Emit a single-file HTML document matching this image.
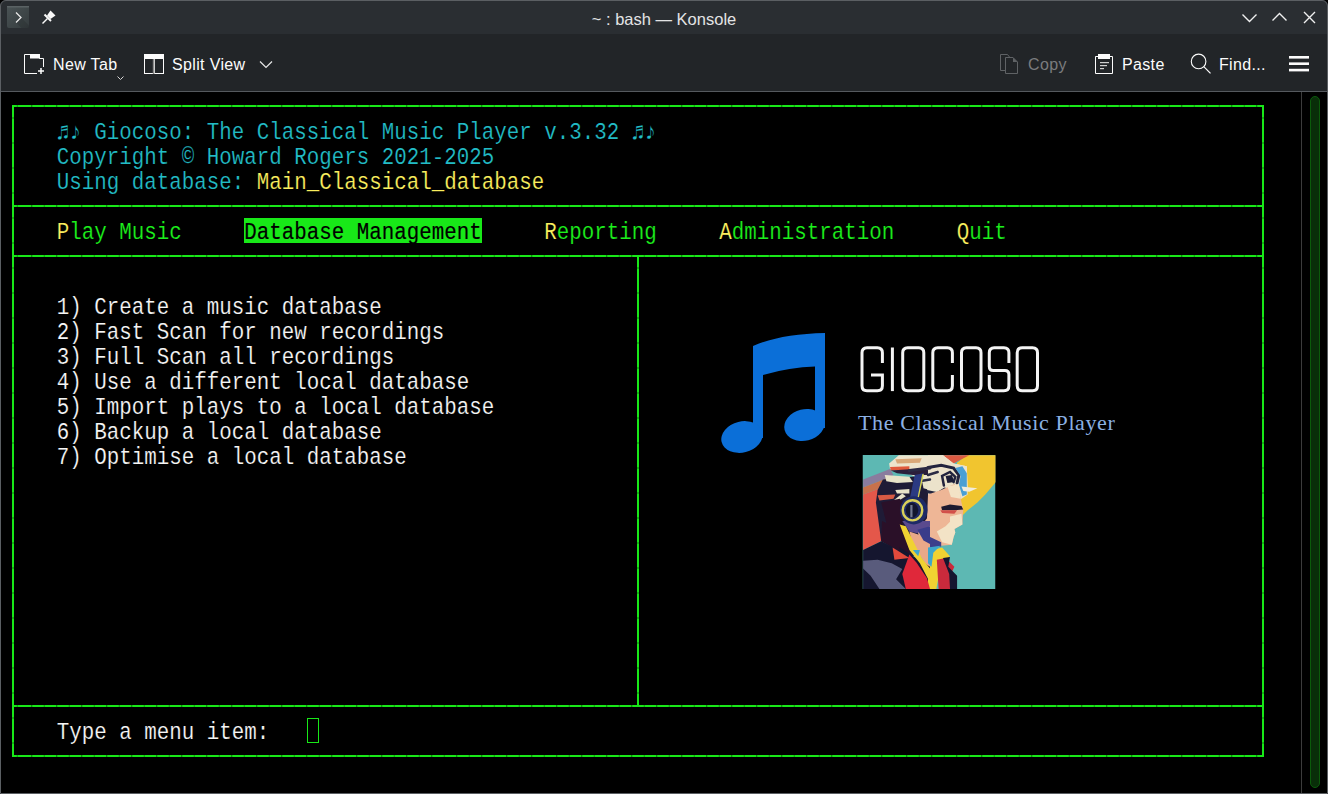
<!DOCTYPE html>
<html><head><meta charset="utf-8">
<style>
html,body{margin:0;padding:0;}
body{width:1328px;height:794px;position:relative;overflow:hidden;background:#000;font-family:"Liberation Sans",sans-serif;}
.abs{position:absolute;}
#titlebar{left:0;top:0;width:1328px;height:34px;background:#2a2e32;border-radius:6px 6px 0 0;}
#toolbar{left:0;top:34px;width:1328px;height:57px;background:#222528;}
#sep{left:0;top:91px;width:1328px;height:1px;background:#55595e;}
.title{left:0;top:9px;width:1328px;text-align:center;color:#e3e4e5;font-size:16.5px;line-height:20px;}
.tb{color:#fcfcfc;font-size:16px;letter-spacing:0.35px;line-height:20px;top:55px;}
.term{font-family:"Liberation Mono",monospace;font-size:20.83px;line-height:25px;white-space:pre;}
.row{position:absolute;left:6.75px;height:25px;transform:translateY(1px) scaleY(1.17);transform-origin:0 5px;-webkit-text-stroke:0.15px #000;}
.cy{color:#22bcc6;}
.ye{color:#fbef5e;}
.gr{color:#1cf01c;}
.wh{color:#f6f6f6;}
.hl{color:#000;}
.hline{position:absolute;height:2px;background-color:#18e818;background-image:repeating-linear-gradient(90deg,transparent 0,transparent 24px,rgba(0,0,0,.5) 24px,rgba(0,0,0,.5) 25px),repeating-linear-gradient(90deg,transparent 0,transparent 24px,rgba(0,0,0,.35) 24px,rgba(0,0,0,.35) 25px);background-position:-4.75px 0,7.75px 0;}
.vline{position:absolute;width:2px;background-color:#18e818;background-image:repeating-linear-gradient(180deg,transparent 0,transparent 24px,rgba(0,0,0,.45) 24px,rgba(0,0,0,.45) 25px);background-position:0 -11.5px;}
</style></head><body>
<div id="titlebar" class="abs"></div>
<div id="toolbar" class="abs"></div>
<div id="sep" class="abs"></div>

<div class="abs title">~ : bash — Konsole</div>


<svg class="abs" style="left:0;top:0" width="1328" height="794" viewBox="0 0 1328 794">
<!-- title bar icons -->
<defs><linearGradient id="tg" x1="0" y1="0" x2="1" y2="1"><stop offset="0" stop-color="#4a5355"/><stop offset="1" stop-color="#353c3e"/></linearGradient></defs><rect x="7" y="6" width="22" height="22" rx="2" fill="url(#tg)"/><path d="M16 22.5 L21 17.5 L29 25.5 V26 Q29 28 27 28 H21.5 Z" fill="#000" opacity="0.12"/>
<rect x="7" y="6" width="22" height="1.5" fill="#5a6264"/>
<path d="M16 12.5 L21 17.5 L16 22.5" fill="none" stroke="#e8e8e8" stroke-width="1.3"/>
<path d="M50.5 10.5 L55.5 15.5 L50.5 19 L47 15.5 Z" fill="#fafafa"/>
<path d="M44.5 14.5 L51 21" stroke="#fafafa" stroke-width="2"/>
<path d="M42.5 23.5 L47.5 18.5" stroke="#fafafa" stroke-width="1.5"/>
<path d="M1242.5 14.5 L1249.5 21.5 L1256.5 14.5" fill="none" stroke="#f0f0f0" stroke-width="1.4"/>
<path d="M1272.5 20.5 L1279.5 13.5 L1286.5 20.5" fill="none" stroke="#f0f0f0" stroke-width="1.4"/>
<path d="M1304 12 L1315 23 M1315 12 L1304 23" fill="none" stroke="#f0f0f0" stroke-width="1.4"/>
<!-- new tab icon -->
<g fill="none" stroke="#fcfcfc" stroke-width="1">
<path d="M24.5 54.5 H39.5 V58.5 H43.5 V67"/>
<path d="M24.5 54.5 V73.5 H37"/>
</g>
<rect x="30" y="54" width="10" height="4.5" fill="#fcfcfc"/>
<path d="M38 71 H44 M41 68 V74" stroke="#fcfcfc" stroke-width="1.5"/>
<path d="M117.5 76.5 L120.5 79.5 L123.5 76.5" fill="none" stroke="#d8d8d8" stroke-width="1"/>
<!-- split view icon -->
<g fill="none" stroke="#fcfcfc" stroke-width="1">
<rect x="144.5" y="54.5" width="9" height="19"/>
<rect x="154.5" y="54.5" width="9" height="19"/>
</g>
<rect x="144" y="54" width="10" height="5" fill="#fcfcfc"/><rect x="154" y="54" width="10" height="5" fill="#fcfcfc"/>
<rect x="152.8" y="59" width="1.6" height="15" fill="#8a8a8a"/>
<path d="M260 61.5 L266 67.5 L272 61.5" fill="none" stroke="#e8e8e8" stroke-width="1.2"/>
<!-- copy icon (disabled) -->
<g fill="none" stroke="#5f6265" stroke-width="1">
<path d="M1005.5 70.5 H1000.5 V54.5 H1007.5 L1009.5 57"/>
<path d="M1005.5 57.5 H1013 L1017.5 62 V73.5 H1005.5 Z"/>
</g>
<path d="M1013 57.5 V62 H1017.5" fill="#5f6265"/>
<!-- paste icon -->
<g fill="none" stroke="#fcfcfc" stroke-width="1">
<path d="M1098 56.5 H1095.5 V73.5 H1112.5 V56.5 H1110"/>
</g>
<rect x="1098" y="54" width="12" height="5" fill="#fcfcfc"/>
<rect x="1100" y="62" width="9" height="1.2" fill="#d0d0d0"/>
<rect x="1100" y="65" width="7" height="1.2" fill="#d0d0d0"/>
<rect x="1100" y="68" width="4" height="1.2" fill="#d0d0d0"/>
<!-- find icon -->
<circle cx="1198.6" cy="61.4" r="7.3" fill="none" stroke="#fcfcfc" stroke-width="1.1"/>
<path d="M1203.8 66.6 L1210.5 73.3" stroke="#fcfcfc" stroke-width="1.2"/>
<!-- hamburger -->
<rect x="1289" y="56" width="20" height="2.6" fill="#fcfcfc"/>
<rect x="1289" y="62.4" width="20" height="2.6" fill="#fcfcfc"/>
<rect x="1289" y="68.8" width="20" height="2.6" fill="#fcfcfc"/>
</svg>

<!-- toolbar text -->
<div class="abs tb" style="left:53px">New Tab</div>
<div class="abs tb" style="left:172px">Split View</div>
<div class="abs tb" style="left:1028px;color:#7a7c7e">Copy</div>
<div class="abs tb" style="left:1122px">Paste</div>
<div class="abs tb" style="left:1219px">Find...</div>

<!-- terminal -->
<div class="abs" style="left:244.25px;top:218px;width:237.5px;height:25px;background:#18e818"></div>
<div class="term">
<div class="row cy" style="top:93px"></div>
<div class="row cy" style="top:118px">    ♬♪ Giocoso: The Classical Music Player v.3.32 ♬♪</div>
<div class="row cy" style="top:143px">    Copyright © Howard Rogers 2021-2025</div>
<div class="row cy" style="top:168px">    Using database: <span class="ye">Main_Classical_database</span></div>
<div class="row gr" style="top:218px">    <span class="ye">P</span>lay Music     <span class="hl">Database Management</span>     <span class="ye">R</span>eporting     <span class="ye">A</span>dministration     <span class="ye">Q</span>uit</div>
<div class="row wh" style="top:293px">    1) Create a music database</div>
<div class="row wh" style="top:318px">    2) Fast Scan for new recordings</div>
<div class="row wh" style="top:343px">    3) Full Scan all recordings</div>
<div class="row wh" style="top:368px">    4) Use a different local database</div>
<div class="row wh" style="top:393px">    5) Import plays to a local database</div>
<div class="row wh" style="top:418px">    6) Backup a local database</div>
<div class="row wh" style="top:443px">    7) Optimise a local database</div>
<div class="row wh" style="top:718px">    Type a menu item:</div>
</div>

<!-- box lines -->
<div class="hline" style="left:12px;top:105px;width:1252px"></div>
<div class="hline" style="left:12px;top:205px;width:1252px"></div>
<div class="hline" style="left:12px;top:255px;width:1252px"></div>
<div class="hline" style="left:12px;top:705px;width:1252px"></div>
<div class="hline" style="left:12px;top:755px;width:1252px"></div>
<div class="vline" style="left:12px;top:105px;height:652px"></div>
<div class="vline" style="left:1262px;top:105px;height:652px"></div>
<div class="vline" style="left:637px;top:255px;height:452px"></div>
<!-- cursor -->
<div class="abs" style="left:307px;top:718px;width:10px;height:23px;border:1px solid #18e818;"></div>

<!-- scrollbar -->
<div class="abs" style="left:1301px;top:92px;width:1px;height:701px;background:#3c3c3c"></div>
<div class="abs" style="left:1310px;top:96px;width:8px;height:690px;border:1px solid #0b5a0b;background:#092e09;border-radius:5px"></div>


<svg class="abs" style="left:0;top:0" width="1328" height="794" viewBox="0 0 1328 794">
<!-- music note -->
<g fill="#0b6fd8">
<path d="M753 346 Q780 334 825 333 V428 H815 V366.5 Q790 367 763 375 V438 H753 Z"/>
<ellipse cx="742" cy="437" rx="21" ry="15.5" transform="rotate(-14 742 437)"/>
<ellipse cx="804.5" cy="425" rx="20.5" ry="15.8" transform="rotate(-14 804.5 425)"/>
</g>
<g fill="none" stroke="#f4f4f4" stroke-width="3"><path d="M882.4 363 V352.8 Q882.4 347.8 877.4 347.8 H867 Q862 347.8 862 352.8 V385.8 Q862 390.8 867 390.8 H877.4 Q882.4 390.8 882.4 385.8 V375 H871"/><path d="M892.4 347.5 V391.1"/><path d="M907.7 347.8 H918.8 Q923.8 347.8 923.8 352.8 V385.8 Q923.8 390.8 918.8 390.8 H907.7 Q902.7 390.8 902.7 385.8 V352.8 Q902.7 347.8 907.7 347.8 Z"/><path d="M952.4 363 V352.8 Q952.4 347.8 947.4 347.8 H937.8 Q932.8 347.8 932.8 352.8 V385.8 Q932.8 390.8 937.8 390.8 H947.4 Q952.4 390.8 952.4 385.8 V375"/><path d="M966.5 347.8 H976 Q981 347.8 981 352.8 V385.8 Q981 390.8 976 390.8 H966.5 Q961.5 390.8 961.5 385.8 V352.8 Q961.5 347.8 966.5 347.8 Z"/><path d="M1008.9 363 V352.8 Q1008.9 347.8 1003.9 347.8 H994.3 Q989.3 347.8 989.3 352.8 V366.5 Q989.3 370.5 993.3 370.5 H1004.9 Q1008.9 370.5 1008.9 374.5 V385.8 Q1008.9 390.8 1003.9 390.8 H994.3 Q989.3 390.8 989.3 385.8 V375"/><path d="M1022.2 347.8 H1032.5 Q1037.5 347.8 1037.5 352.8 V385.8 Q1037.5 390.8 1032.5 390.8 H1022.2 Q1017.2 390.8 1017.2 385.8 V352.8 Q1017.2 347.8 1022.2 347.8 Z"/></g>
</svg>
<div class="abs" style="left:858px;top:407.5px;font-family:'Liberation Serif',serif;font-size:22px;letter-spacing:0.62px;line-height:30px;color:#8bb0e3;white-space:pre;" id="tag">The Classical Music Player</div>

<!-- portrait --><svg class="abs" style="left:0;top:0" width="1328" height="794" viewBox="0 0 1328 794"><defs><clipPath id="pc"><rect x="862.5" y="455" width="133" height="134"/></clipPath></defs><g clip-path="url(#pc)"><rect x="862.5" y="455" width="133" height="134" fill="#5db8b3"/><polygon fill="#f1c52f" points="966.8,455.2 995.9,455.2 995.9,482.1 985.3,494.4 977.4,502.4 967.7,510.3 961.5,516.5 958.0,524.5 954.4,497.1 957.1,462.7"/><polygon fill="#dc5a42" points="943.0,455.2 969.4,455.2 961.5,459.2 953.6,463.6 947.4,461.8"/><polygon fill="#8a7c9e" points="863.1,479.4 890.0,468.9 893.5,475.0 886.4,478.6 863.1,487.4"/><polygon fill="#c8714c" points="863.1,487.4 886.4,478.6 889.1,484.7 882.0,487.4 863.1,494.4"/><polygon fill="#e4574a" points="863.1,494.4 882.0,487.4 889.1,484.7 886.4,523.0 882.0,521.0 881.2,541.3 863.1,550.1"/><polygon fill="#1f1b36" points="882.9,479.4 930.0,475.0 928.0,479.4 941.2,495.3 945.6,538.6 930.0,547.4 909.4,558.0 881.2,541.3 875.9,502.4 877.6,490.0"/><polygon fill="#ede4cc" points="890.0,468.9 889.1,463.6 898.8,455.2 943.0,455.2 953.6,463.6 966.8,466.2 967.7,486.5 963.3,494.4 957.1,484.7 941.2,494.4 928.0,490.9 921.7,479.4 909.4,474.2 897.0,470.6"/><polygon fill="#d9a878" points="895.3,459.2 921.7,458.3 919.9,462.7 897.0,463.6"/><polygon fill="#e05a3c" points="890.0,467.1 909.4,466.2 909.4,470.6 890.9,470.6"/><polygon fill="#e8e2c8" points="884.7,475.0 909.4,476.8 912.9,482.1 897.0,483.0 886.4,481.2"/><polygon fill="#e8e2c8" points="895.3,490.0 909.4,489.1 909.4,493.6 897.0,493.6"/><polygon fill="#e8e2c8" points="890.9,502.4 902.3,493.6 905.8,496.2 893.5,504.1"/><polygon fill="#d85a44" points="877.6,495.3 895.3,494.4 893.5,498.8 879.4,500.6"/><polygon fill="#e8e2c8" points="921.7,479.4 930.0,477.7 930.0,490.0 923.5,488.3"/><polygon fill="#2b1e3a" points="890.9,470.6 912.9,468.9 930.0,469.8 930.0,475.0 912.9,475.0 897.0,473.3"/><polygon fill="#ece3cb" points="928.0,455.2 943.0,455.2 953.6,463.6 966.8,466.2 967.7,494.4 961.5,498.8 928.0,498.8"/><path d="M928.0,467.5 L941.2,465.3 L953.6,468.0 L958.9,475.0 L957.1,483.0" fill="none" stroke="#22243e" stroke-width="3" stroke-linecap="round"/><path d="M943.9,485.6 L942.1,475.9 L950.0,472.0 L955.3,476.8 L953.6,482.1" fill="none" stroke="#22243e" stroke-width="2.5" stroke-linecap="round"/><polygon fill="#1a1c36" points="945.6,475.9 951.8,475.0 954.4,482.1 947.4,483.0"/><path d="M928.0,491.8 L937.7,493.6 L944.8,489.1" fill="none" stroke="#22243e" stroke-width="3" stroke-linecap="round"/><path d="M928.0,475.0 L937.7,472.0" fill="none" stroke="#2a2a44" stroke-width="2.5" stroke-linecap="round"/><path d="M909.4,470.6 L930.0,468.0" fill="none" stroke="#2a2a44" stroke-width="3" stroke-linecap="round"/><path d="M914.7,482.1 L930.0,479.4" fill="none" stroke="#2a2a44" stroke-width="2.5" stroke-linecap="round"/><polygon fill="#4a9fd4" points="955.3,468.0 962.4,466.2 966.8,473.3 966.8,494.4 962.4,496.2 958.9,484.7 960.6,475.9"/><polygon fill="#f1ecdc" points="961.5,486.5 977.4,488.3 969.4,491.8 963.3,490.9"/><polygon fill="#2a1028" points="881.2,502.4 899.7,498.8 905.8,505.9 902.3,523.0 901.4,521.0 909.4,545.7 909.4,558.0 893.5,547.4 881.2,541.3 882.0,521.0 886.4,523.0"/><polygon fill="#eeb696" points="928.0,494.4 941.2,490.0 954.4,483.9 959.7,492.7 961.5,502.4 963.3,509.4 962.4,524.5 954.4,528.9 955.3,532.5 953.6,536.9 951.8,544.8 941.2,545.7 933.3,543.9 928.0,547.4 921.7,547.4 917.3,529.8 923.5,523.0 927.0,518.2"/><polygon fill="#f3e3c6" points="947.4,486.5 958.9,483.9 960.6,498.8 950.9,497.1"/><polygon fill="#f3e3c6" points="950.0,516.5 961.5,513.8 962.4,524.5 954.4,528.9 955.3,532.5 953.6,536.9 951.8,544.8 942.1,542.2 936.8,531.6 945.6,526.3 950.0,521.8"/><polygon fill="#1e1a30" points="941.2,506.8 950.0,504.6 961.5,505.9 963.3,509.4 954.4,510.3 942.1,510.3"/><polygon fill="#d2504a" points="940.3,510.3 957.1,510.3 954.4,513.8 942.1,512.9"/><polygon fill="#3c3f8c" points="928.0,536.0 941.2,542.2 941.2,546.6 928.0,547.4"/><polygon fill="#5a4a8e" points="902.3,521.0 930.0,521.0 930.0,526.3 917.3,533.3 909.4,531.6"/><polygon fill="#eaa888" points="909.4,531.6 930.0,538.6 930.0,570.4 921.7,558.0 912.9,547.4"/><polygon fill="#3a3c8a" points="917.3,529.8 930.0,526.3 930.0,543.9 923.5,540.4"/><polygon fill="#2b3a82" points="909.4,500.6 914.7,475.0 923.5,473.3 918.2,498.8"/><polygon fill="#d7d34f" points="917.3,498.8 922.2,474.2 923.9,473.7 918.6,498.8"/><ellipse cx="913.8" cy="510.3" rx="13.7" ry="14.1" fill="#1e2a66"/><ellipse cx="912.5" cy="510.3" rx="9.7" ry="10.1" fill="none" stroke="#d8cf5a" stroke-width="2.4"/><ellipse cx="912.0" cy="510.3" rx="6.2" ry="7.5" fill="#12162e"/><rect x="910.3" y="505.0" width="2.2" height="12.3" fill="#707890"/><polygon fill="#15162f" points="899.7,547.4 930.0,566.8 930.0,588.9 899.7,588.9"/><polygon fill="#15162f" points="863.1,550.1 881.2,541.3 893.5,547.4 909.4,558.0 907.6,566.8 901.4,572.1 905.8,588.9 863.1,588.9"/><polygon fill="#e24a3c" points="892.6,547.4 909.4,558.0 894.4,559.8"/><polygon fill="#595b7c" points="863.1,560.7 877.6,559.8 891.7,563.3 902.3,569.0 896.1,579.2 905.8,588.9 879.4,588.9 870.6,575.7 863.1,568.6"/><polygon fill="#f0d232" points="899.7,524.5 905.8,526.3 914.7,543.9 921.7,558.0 930.0,568.6 930.0,582.7 919.9,563.3 909.4,550.1"/><polygon fill="#f0d232" points="933.3,550.1 942.1,547.4 950.0,556.3 941.2,563.3 935.9,591.0 928.0,591.0 928.0,577.4"/><polygon fill="#e0283a" points="909.4,554.5 916.4,562.4 927.0,578.3 930.0,588.9 905.8,588.9 902.3,573.9"/><polygon fill="#3ea6cc" points="928.0,547.4 940.3,545.7 933.3,552.7 931.5,566.8 928.0,563.3"/><polygon fill="#3ea6cc" points="912.9,550.1 919.9,550.1 918.2,556.3"/><polygon fill="#c92a3c" points="936.8,559.8 945.6,558.0 954.4,566.8 950.9,573.9 953.6,588.9 938.6,588.9"/><polygon fill="#15162f" points="943.0,558.0 950.0,557.1 948.3,566.8 957.1,575.7 957.1,588.9 950.0,588.9 949.2,573.9"/></g></svg><!-- /portrait -->
<div class="abs" style="left:0;top:0;width:1328px;height:794px;box-sizing:border-box;border:1px solid #5b5f63;border-radius:6px 6px 0 0;"></div>
</body></html>
